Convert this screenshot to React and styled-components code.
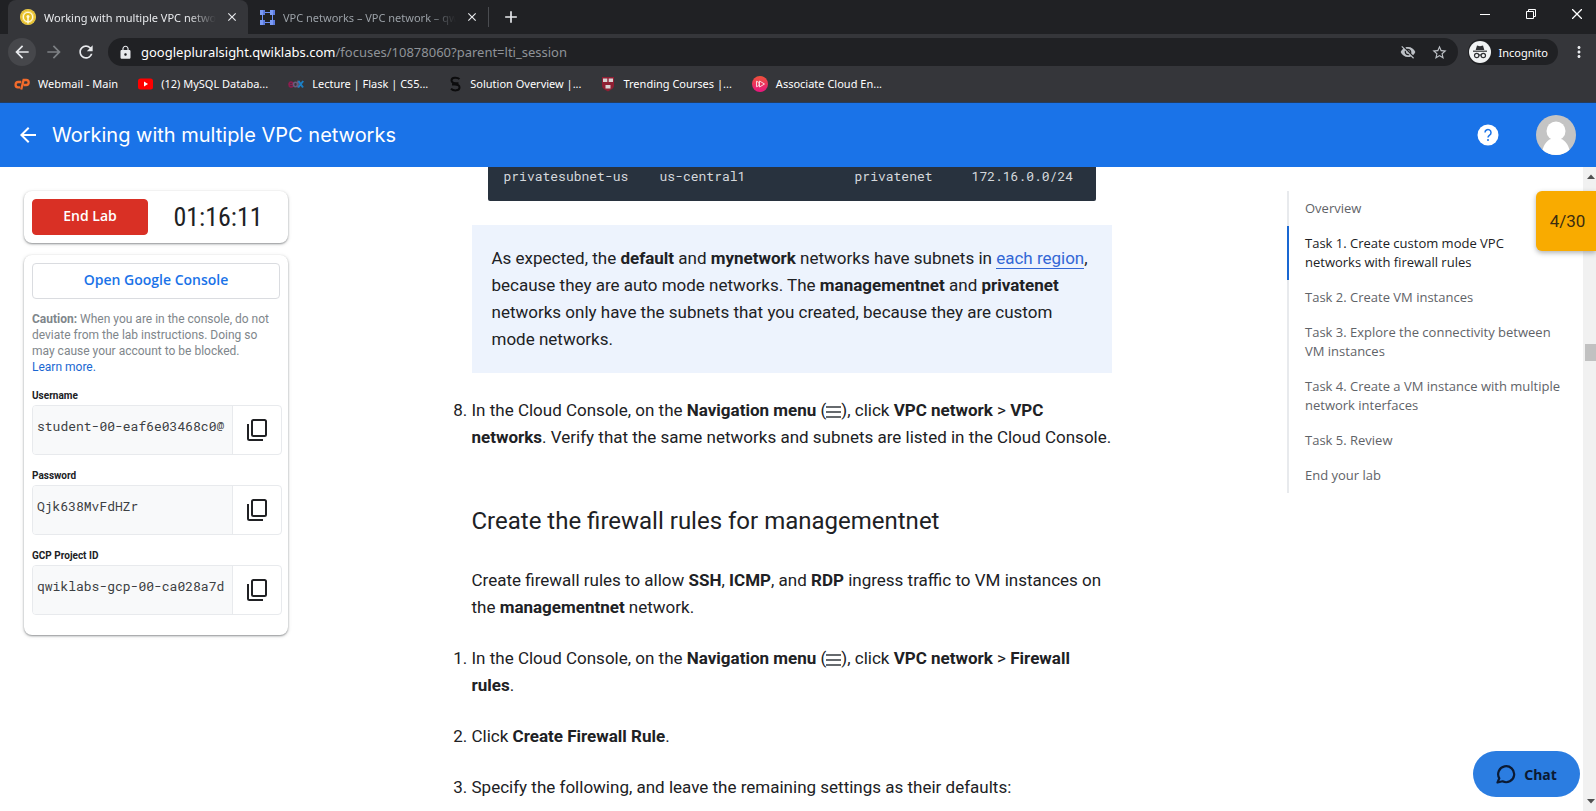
import React from 'react';
import styled, { createGlobalStyle } from 'styled-components';
import {
  MdArrowBack,
  MdArrowForward,
  MdRefresh,
  MdLock,
  MdStarBorder,
  MdVisibilityOff,
  MdMoreVert,
  MdClose,
  MdAdd,
} from 'react-icons/md';

const UI_FONT = '"Noto Sans", "Segoe UI", sans-serif';
const BODY_FONT = 'Roboto, Arial, sans-serif';
const HEAD_FONT = '"Open Sans", "Google Sans", sans-serif';
const MONO_FONT = '"Roboto Mono", "Liberation Mono", monospace';

const GlobalStyle = createGlobalStyle`
  *, *::before, *::after { box-sizing: border-box; }
  body { margin: 0; background: #fff; overflow: hidden; font-family: ${BODY_FONT}; color: #202124; }
  button { border: 0; background: none; padding: 0; font: inherit; color: inherit; cursor: pointer; }
  svg { display: block; flex: none; }
`;

const Window = styled.div`
  height: 100vh;
  display: flex;
  flex-direction: column;
`;

/* Browser chrome */

const TabStrip = styled.div`
  flex: none;
  height: 34px;
  display: flex;
  padding-left: 8px;
  background: #202124;
  font-family: ${UI_FONT};
  font-size: 11px;
  overflow: hidden;
`;

const Tab = styled.div`
  flex: none;
  width: 240px;
  display: flex;
  align-items: center;
  gap: 8px;
  padding: 0 8px 0 12px;
  border-radius: 8px 8px 0 0;
  background: ${(p) => (p.$active ? '#35363a' : 'transparent')};
  color: ${(p) => (p.$active ? '#e8eaed' : '#9aa0a6')};
`;

const TabTitle = styled.span`
  flex: 1;
  min-width: 0;
  overflow: hidden;
  white-space: nowrap;
  mask-image: linear-gradient(to right, #000 calc(100% - 28px), transparent);
`;

const TabButton = styled.button`
  display: grid;
  place-items: center;
  width: 16px;
  height: 16px;
  color: #e8eaed;
`;

const TabDivider = styled.div`
  width: 1px;
  height: 20px;
  align-self: center;
  background: #4a4c50;
`;

const NewTab = styled.button`
  width: 44px;
  display: grid;
  place-items: center;
  color: #e8eaed;
`;

const WindowControls = styled.div`
  margin: 0 -4px 0 auto;
  display: flex;
  height: 28px;
`;

const WindowButton = styled.button`
  width: 46px;
  display: grid;
  place-items: center;
  color: #fff;
`;

const Toolbar = styled.div`
  flex: none;
  height: 35px;
  display: flex;
  align-items: center;
  padding: 1px 8px 0;
  background: #35363a;
  color: #e8eaed;
  font-family: ${UI_FONT};
`;

const NavButton = styled.button`
  width: 28px;
  height: 28px;
  margin-right: 4px;
  display: grid;
  place-items: center;
  border-radius: 50%;
  background: ${(p) => (p.$raised ? '#46474b' : 'transparent')};
  color: ${(p) => (p.$dim ? '#7d8084' : '#e8eaed')};
`;

const Omnibox = styled.div`
  flex: 1;
  height: 28px;
  margin-left: 4px;
  display: flex;
  align-items: center;
  gap: 8px;
  padding: 0 6px 0 10px;
  border-radius: 14px;
  background: #202124;
`;

const Address = styled.div`
  flex: 1;
  font-size: 13px;
  line-height: 18px;
  color: #fff;
  span { color: #8f9398; }
`;

const OmniButton = styled.button`
  width: 24px;
  display: grid;
  place-items: center;
  color: #bdc1c6;
`;

const Profile = styled.button`
  height: 26px;
  display: flex;
  align-items: center;
  gap: 8px;
  margin: 0 12px 0 10px;
  padding: 0 10px 0 1px;
  border-radius: 13px;
  background: #202124;
  font-size: 11px;
  color: #fff;
`;

const BookmarkBar = styled.nav`
  flex: none;
  height: 34px;
  display: flex;
  align-items: center;
  gap: 20px;
  padding: 0 14px 4px;
  border-bottom: 1px solid #243c5e;
  background: #35363a;
`;

const Bookmark = styled.a`
  display: flex;
  align-items: center;
  gap: 8px;
  color: #fff;
  font-family: ${UI_FONT};
  font-size: 11px;
  line-height: 16px;
  text-decoration: none;
  white-space: nowrap;
`;

/* Lab header */

const LabHeader = styled.header`
  flex: none;
  height: 64px;
  display: flex;
  align-items: center;
  padding: 0 20px 0 16px;
  background: #1a73e8;
  color: #fff;
`;

const HeaderButton = styled.button`
  display: grid;
  place-items: center;
  margin-right: ${(p) => p.$after || 0}px;
`;

const LabTitle = styled.h1`
  flex: 1;
  margin: 0;
  font-family: Inter, "Google Sans", sans-serif;
  font-size: 20px;
  line-height: 28px;
  font-weight: 400;
`;

/* Page */

const Page = styled.div`
  position: relative;
  flex: 1;
  min-height: 0;
  display: flex;
  overflow: hidden;
`;

const Columns = styled.div`
  flex: 1;
  min-width: 0;
  display: grid;
  grid-template-columns: 288px minmax(0, 1fr) 296px;
  align-items: start;
`;

const Sidebar = styled.aside`
  display: grid;
  gap: 12px;
  padding: 24px 0 0 24px;
`;

const Card = styled.section`
  padding: 8px;
  border-radius: 8px;
  background: #fff;
  box-shadow: 0 1px 2px rgba(60, 64, 67, 0.5), 0 1px 4px rgba(60, 64, 67, 0.15);
`;

const TimerCard = styled(Card)`
  display: flex;
  align-items: center;
`;

const LabButton = styled.button`
  width: ${(p) => (p.$danger ? '116px' : '100%')};
  height: 36px;
  padding-bottom: 3px;
  border: 1px solid ${(p) => (p.$danger ? '#d93025' : '#dadce0')};
  border-radius: 4px;
  background: ${(p) => (p.$danger ? '#d93025' : '#fff')};
  color: ${(p) => (p.$danger ? '#fff' : '#1a73e8')};
  font-family: ${HEAD_FONT};
  font-size: 14px;
  font-weight: 600;
`;

const Timer = styled.div`
  flex: 1;
  padding-left: 8px;
  text-align: center;
  font-family: "Roboto Condensed", Roboto, sans-serif;
  font-size: 26px;
  line-height: 36px;
`;

const CredentialsCard = styled(Card)`
  padding-bottom: 20px;
`;

const Caution = styled.p`
  margin: 12px 0 15px;
  font-size: 12px;
  line-height: 16px;
  color: #80868b;
  a { color: #1967d2; text-decoration: none; }
`;

const Credential = styled.div`
  & + & { margin-top: 15px; }
  label {
    display: block;
    margin-bottom: 3px;
    font-size: 10px;
    line-height: 12px;
    font-weight: 700;
  }
`;

const CredentialBox = styled.div`
  height: 50px;
  display: flex;
  margin-right: -2px;
  border: 1px solid #e8eaed;
  border-radius: 4px;
  overflow: hidden;
  input {
    flex: 1;
    min-width: 0;
    border: 0;
    padding: 0 0 8px 4px;
    background: #f8f9fa;
    color: #3c4043;
    font-family: ${MONO_FONT};
    font-size: 13px;
  }
  button {
    width: 49px;
    display: grid;
    place-items: center;
    border-left: 1px solid #e8eaed;
    color: #202124;
  }
`;

const ArticleColumn = styled.div`
  display: grid;
  padding-left: 8px;
`;

const Article = styled.main`
  width: 640px;
  max-width: 100%;
  justify-self: center;
  font-size: 17px;
  line-height: 27px;
  b { font-weight: 700; }
  p { margin: 0; }
`;

const Terminal = styled.pre`
  margin: 0 16px 24px;
  padding: 0 16px 16px;
  border-radius: 0 0 2px 2px;
  background: #28323e;
  color: #d5d8dc;
  font-family: ${MONO_FONT};
  font-size: 13px;
  line-height: 18px;
`;

const Callout = styled.div`
  margin-bottom: 24px;
  padding: 20px;
  background: #edf3fd;
  a {
    color: #3367d6;
    text-decoration: none;
    border-bottom: 1px solid #3367d6;
  }
`;

const Steps = styled.ol`
  margin: 0;
  padding: 0;
  li + li { margin-top: 24px; }
`;

const Heading = styled.h2`
  margin: 54px 0 30px;
  font-size: 24px;
  line-height: 32px;
  font-weight: 400;
`;

const Intro = styled.p`
  && { margin-bottom: 24px; }
`;

const InlineMenu = styled.svg`
  && { display: inline-block; }
  vertical-align: -2px;
`;

const Outline = styled.nav`
  margin-top: 24px;
  a {
    display: block;
    padding: 8px 20px 8px 16px;
    border-left: 2px solid #e8eaed;
    color: #5f6368;
    font-family: ${HEAD_FONT};
    font-size: 13px;
    line-height: 19px;
    text-decoration: none;
  }
  a[aria-current] {
    border-left-color: #1967d2;
    color: #202124;
  }
`;

const ScrollTrack = styled.div`
  flex: none;
  width: 13px;
  display: flex;
  flex-direction: column;
  align-items: flex-end;
  padding: 5px 0;
  background: #f1f1f1;
`;

const ScrollThumb = styled.div`
  width: 11px;
  height: 17px;
  margin: 164px 0 auto;
  background: #c1c1c1;
`;

const Score = styled.div`
  position: absolute;
  top: 24px;
  right: 0;
  width: 60px;
  height: 60px;
  display: grid;
  place-items: center;
  padding-left: 3px;
  border-radius: 6px 0 0 6px;
  background: #f9ab00;
  box-shadow: 0 2px 5px rgba(60, 64, 67, 0.4);
  color: #3c2d10;
  font-size: 17px;
`;

const ChatButton = styled.button`
  position: absolute;
  right: 16px;
  bottom: 14px;
  width: 107px;
  height: 46px;
  display: flex;
  align-items: center;
  justify-content: center;
  gap: 8px;
  border-radius: 23px;
  background: #2b7de1;
  color: #0b1a33;
  font-family: ${UI_FONT};
  font-size: 14px;
  font-weight: 700;
`;

function QwiklabsIcon() {
  return (
    <svg width="16" height="16" viewBox="0 0 16 16">
      <circle cx="8" cy="8" r="8" fill="#f0d25a" />
      <circle cx="8" cy="8" r="7" fill="none" stroke="#e0b81c" strokeWidth="1" />
      <circle cx="8" cy="8" r="4.6" fill="#e5bd1f" stroke="#fff9dc" strokeWidth="1.3" />
      <path d="M8 7v7.500" stroke="#fff9dc" strokeWidth="1.6" />
      <circle cx="8" cy="7.500" r="1.500" fill="#fff9dc" />
    </svg>
  );
}

function VpcIcon() {
  return (
    <svg width="15" height="15" viewBox="0 0 15 15">
      <path d="M2 5h1v5H2zM12 5h1v5h-1zM5 2h5v1H5zM5 12h5v1H5z" fill="#6d8ff0" />
      <path d="M0 0h5v5H0zM10 0h5v5h-5zM0 10h5v5H0zM10 10h5v5h-5z" fill="#7a9af5" />
      <path d="M3 0h2v5H3zM13 0h2v5h-2zM3 10h2v5H3zM13 10h2v5h-2z" fill="#5c7be0" />
    </svg>
  );
}

function IncognitoIcon() {
  return (
    <svg width="22" height="22" viewBox="0 0 22 22">
      <circle cx="11" cy="11" r="11" fill="#f1f3f4" />
      <path d="M8 4.500l3 .7 3-.7L15.300 9H6.700z" fill="#303134" />
      <path d="M4 10.200h14" stroke="#303134" strokeWidth="1.200" />
      <g fill="none" stroke="#303134" strokeWidth="1.200">
        <circle cx="7.700" cy="14.500" r="2.200" />
        <circle cx="14.300" cy="14.500" r="2.200" />
        <path d="M9.900 14.200q1.100-.8 2.200 0" />
      </g>
    </svg>
  );
}

function CPanelIcon() {
  return (
    <svg width="16" height="16" viewBox="0 0 16 16" fill="none" stroke="#f26b2c" strokeWidth="2.300">
      <path d="M7.300 6H4.500a2.700 2.700 0 0 0-.4 5.400h2" />
      <path d="M7.200 13.500L9.600 4h2.600a2.500 2.500 0 0 1 0 5h-2.500" />
    </svg>
  );
}

function YouTubeIcon() {
  return (
    <svg width="15" height="16" viewBox="0 0 15 16">
      <rect y="2.500" width="15" height="11" rx="2.500" fill="#f00" />
      <path d="M6 5.600v4.800L10 8z" fill="#fff" />
    </svg>
  );
}

function EdxIcon() {
  return (
    <svg width="16" height="16" viewBox="0 0 16 16" fill="none" strokeWidth="1.600">
      <path d="M1 8.500h4C5 5 1 5.500 1 8.500s3 3 4 1.500" stroke="#8c1d4f" />
      <path d="M10 4.500v7M9.500 8.500c0-3-4-3-4 0s4 3 4 0" stroke="#6c5a7a" />
      <path d="M10.500 5l4.500 6.500M15.200 5l-5 6.500" stroke="#1c7fc4" strokeWidth="2" />
    </svg>
  );
}

function SIcon() {
  return (
    <svg width="14" height="16" viewBox="0 0 14 16" fill="none" stroke="#0c0c0d" strokeWidth="2">
      <path d="M11.500 3.200C9.500 1 3.500 1 3.500 4.400c0 2.500 3 2.900 7 2.900M4 8.600h3c2.500 0 4.500.6 4.500 2.900 0 3.600-6 3.600-8.500 1.200" />
    </svg>
  );
}

function HarvardIcon() {
  return (
    <svg width="14" height="16" viewBox="0 0 14 16">
      <path d="M1 1h12v8.500c0 3-3 4-6 6-3-2-6-3-6-6z" fill="#8f1f33" />
      <path d="M2 2.500h4.300V6H2zM7.700 2.500H12V6H7.700zM4.500 9h5v3.500h-5z" fill="#d9d3d3" />
    </svg>
  );
}

function PluralsightIcon() {
  return (
    <svg width="16" height="16" viewBox="0 0 16 16">
      <defs>
        <linearGradient id="ps" x1="0" y1="0" x2="0" y2="1">
          <stop offset="0" stopColor="#f0523a" />
          <stop offset="1" stopColor="#e8157f" />
        </linearGradient>
      </defs>
      <circle cx="8" cy="8" r="8" fill="url(#ps)" />
      <path d="M4.500 5.200v5.600L7 9.500v-3zM7.500 5v6l5-3z" fill="none" stroke="#fbd5de" strokeWidth="1" />
    </svg>
  );
}

function HelpIcon() {
  return (
    <svg width="22" height="22" viewBox="0 0 22 22">
      <circle cx="11" cy="11" r="10.500" fill="#fff" />
      <path d="M8 8.600a3 3 0 1 1 4.600 2.500c-1 .7-1.600 1.200-1.600 2.500" fill="none" stroke="#1a73e8" strokeWidth="1.500" />
      <circle cx="11" cy="16" r="1" fill="#1a73e8" />
    </svg>
  );
}

function Avatar() {
  return (
    <svg width="40" height="40" viewBox="0 0 40 40">
      <defs>
        <clipPath id="avatar"><circle cx="20" cy="20" r="20" /></clipPath>
      </defs>
      <g clipPath="url(#avatar)">
        <rect width="40" height="40" fill="#c4c4c4" />
        <circle cx="20" cy="16" r="9.500" fill="#fff" />
        <path d="M6 40c0-9 5-15 9-16h10c4 1 9 7 9 16z" fill="#fff" />
      </g>
    </svg>
  );
}

function CopyIcon() {
  return (
    <svg width="20" height="22" viewBox="0 0 20 22" fill="none" stroke="currentColor" strokeWidth="2">
      <rect x="5" y="1" width="14" height="16" rx="1.500" />
      <path d="M1 5v14.500A1.500 1.500 0 0 0 2.500 21H16" />
    </svg>
  );
}

function ChatIcon() {
  return (
    <svg width="20" height="20" viewBox="0 0 20 20" fill="none" stroke="currentColor" strokeWidth="2.200" strokeLinejoin="round">
      <path d="M1.500 18.500l1.800-4.200A8 8 0 1 1 6.500 17.300z" />
    </svg>
  );
}

function MenuGlyph() {
  return (
    <InlineMenu width="15" height="12" viewBox="0 0 15 12" role="img" aria-label="Navigation menu icon">
      <path d="M0 1h15M0 6h15M0 11h15" stroke="#666a6e" strokeWidth="2" />
    </InlineMenu>
  );
}

const bookmarks = [
  [CPanelIcon, 'Webmail - Main'],
  [YouTubeIcon, '(12) MySQL Databa...'],
  [EdxIcon, 'Lecture | Flask | CS5...'],
  [SIcon, 'Solution Overview |...'],
  [HarvardIcon, 'Trending Courses |...'],
  [PluralsightIcon, 'Associate Cloud En...'],
];

const credentials = [
  ['username', 'Username', 'student-00-eaf6e03468c0@'],
  ['password', 'Password', 'Qjk638MvFdHZr'],
  ['project', 'GCP Project ID', 'qwiklabs-gcp-00-ca028a7d'],
];

const outline = [
  'Overview',
  'Task 1. Create custom mode VPC networks with firewall rules',
  'Task 2. Create VM instances',
  'Task 3. Explore the connectivity between VM instances',
  'Task 4. Create a VM instance with multiple network interfaces',
  'Task 5. Review',
  'End your lab',
];

const subnetRow =
  'privatesubnet-us'.padEnd(20) + 'us-central1'.padEnd(25) + 'privatenet'.padEnd(15) + '172.16.0.0/24';

export default function App() {
  return (
    <Window>
      <GlobalStyle />
      <TabStrip>
        <Tab $active>
          <QwiklabsIcon />
          <TabTitle>Working with multiple VPC networks</TabTitle>
          <TabButton aria-label="Close tab"><MdClose size={14} /></TabButton>
        </Tab>
        <Tab>
          <VpcIcon />
          <TabTitle>VPC networks – VPC network – qwiklabs</TabTitle>
          <TabButton aria-label="Close tab"><MdClose size={14} /></TabButton>
        </Tab>
        <TabDivider />
        <NewTab aria-label="New tab"><MdAdd size={20} /></NewTab>
        <WindowControls>
          <WindowButton aria-label="Minimize">
            <svg width="10" height="10"><path d="M0 5.500h10" stroke="currentColor" /></svg>
          </WindowButton>
          <WindowButton aria-label="Restore">
            <svg width="10" height="10" fill="none" stroke="currentColor">
              <path d="M.5 2.500h7v7h-7zM2.500 2.500v-2h7v7h-2" />
            </svg>
          </WindowButton>
          <WindowButton aria-label="Close">
            <svg width="10" height="10"><path d="M0 0l10 10M10 0L0 10" stroke="currentColor" strokeWidth="1.300" /></svg>
          </WindowButton>
        </WindowControls>
      </TabStrip>

      <Toolbar>
        <NavButton $raised aria-label="Back"><MdArrowBack size={20} /></NavButton>
        <NavButton $dim aria-label="Forward"><MdArrowForward size={20} /></NavButton>
        <NavButton aria-label="Reload"><MdRefresh size={20} /></NavButton>
        <Omnibox>
          <MdLock size={15} />
          <Address>googlepluralsight.qwiklabs.com<span>/focuses/10878060?parent=lti_session</span></Address>
          <OmniButton aria-label="Tracking blocked"><MdVisibilityOff size={16} /></OmniButton>
          <OmniButton aria-label="Bookmark this page"><MdStarBorder size={17} /></OmniButton>
        </Omnibox>
        <Profile><IncognitoIcon />Incognito</Profile>
        <HeaderButton aria-label="Menu"><MdMoreVert size={18} /></HeaderButton>
      </Toolbar>

      <BookmarkBar aria-label="Bookmarks">
        {bookmarks.map(([Icon, label]) => (
          <Bookmark href="#" key={label}><Icon />{label}</Bookmark>
        ))}
      </BookmarkBar>

      <LabHeader>
        <HeaderButton $after={12} aria-label="Back"><MdArrowBack size={24} /></HeaderButton>
        <LabTitle>Working with multiple VPC networks</LabTitle>
        <HeaderButton $after={37} aria-label="Help"><HelpIcon /></HeaderButton>
        <HeaderButton aria-label="Account"><Avatar /></HeaderButton>
      </LabHeader>

      <Page>
        <Columns>
          <Sidebar>
            <TimerCard>
              <LabButton $danger>End Lab</LabButton>
              <Timer>01:16:11</Timer>
            </TimerCard>
            <CredentialsCard>
              <LabButton>Open Google Console</LabButton>
              <Caution>
                <b>Caution:</b> When you are in the console, do not<br />
                deviate from the lab instructions. Doing so<br />
                may cause your account to be blocked.<br />
                <a href="#">Learn more.</a>
              </Caution>
              {credentials.map(([id, label, value]) => (
                <Credential key={id}>
                  <label htmlFor={id}>{label}</label>
                  <CredentialBox>
                    <input id={id} value={value} readOnly />
                    <button aria-label={`Copy ${label}`}><CopyIcon /></button>
                  </CredentialBox>
                </Credential>
              ))}
            </CredentialsCard>
          </Sidebar>

          <ArticleColumn>
            <Article>
              <Terminal>{subnetRow}</Terminal>
              <Callout>
                <p>
                  As expected, the <b>default</b> and <b>mynetwork</b> networks have subnets in{' '}
                  <a href="#">each region</a>, because they are auto mode networks. The{' '}
                  <b>managementnet</b> and <b>privatenet</b> networks only have the subnets that you
                  created, because they are custom mode networks.
                </p>
              </Callout>
              <Steps start={8}>
                <li>
                  In the Cloud Console, on the <b>Navigation menu</b> (<MenuGlyph />), click{' '}
                  <b>VPC network</b> &gt; <b>VPC networks</b>. Verify that the same networks and
                  subnets are listed in the Cloud Console.
                </li>
              </Steps>
              <Heading>Create the firewall rules for managementnet</Heading>
              <Intro>
                Create firewall rules to allow <b>SSH</b>, <b>ICMP</b>, and <b>RDP</b> ingress
                traffic to VM instances on the <b>managementnet</b> network.
              </Intro>
              <Steps>
                <li>
                  In the Cloud Console, on the <b>Navigation menu</b> (<MenuGlyph />), click{' '}
                  <b>VPC network</b> &gt; <b>Firewall rules</b>.
                </li>
                <li>Click <b>Create Firewall Rule</b>.</li>
                <li>Specify the following, and leave the remaining settings as their defaults:</li>
              </Steps>
            </Article>
          </ArticleColumn>

          <Outline aria-label="Lab outline">
            {outline.map((item, i) => (
              <a href="#" key={item} aria-current={i === 1 ? 'true' : undefined}>{item}</a>
            ))}
          </Outline>
        </Columns>

        <ScrollTrack>
          <svg width="10" height="8"><path d="M1 7l4-4.500L9 7z" fill="#505050" /></svg>
          <ScrollThumb />
          <svg width="10" height="8"><path d="M1 1l4 4.500L9 1z" fill="#505050" /></svg>
        </ScrollTrack>

        <Score>4/30</Score>
        <ChatButton><ChatIcon />Chat</ChatButton>
      </Page>
    </Window>
  );
}
